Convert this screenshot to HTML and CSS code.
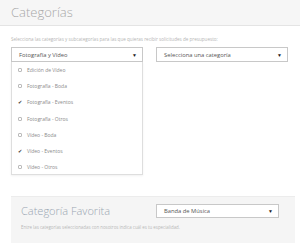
FILE: index.html
```html
<!DOCTYPE html>
<html lang="es">
<head>
<meta charset="utf-8">
<link rel="stylesheet" href="styles.css">
</head>
<body>
<div class="page">
  <div class="header">Categorías</div>
  <p class="intro">Selecciona las categorías y subcategorías para las que quieras recibir solicitudes de presupuesto:</p>
  <div class="row">
    <div class="col">
      <div class="select open"><span>Fotografía y Vídeo</span><span class="caret">▼</span></div>
      <ul class="list">
        <li><span class="cb"></span>Edición de Vídeo</li>
        <li><span class="cb"></span>Fotografía - Boda</li>
        <li><span class="cb on">✔</span>Fotografía - Eventos</li>
        <li><span class="cb"></span>Fotografía - Otros</li>
        <li><span class="cb"></span>Vídeo - Boda</li>
        <li><span class="cb on">✔</span>Vídeo - Eventos</li>
        <li><span class="cb"></span>Vídeo - Otros</li>
      </ul>
    </div>
    <div class="col">
      <div class="select"><span>Selecciona una categoría</span><span class="caret">▼</span></div>
    </div>
  </div>
  <div class="fav">
    <div class="fav-left">
      <div class="fav-title">Categoría Favorita</div>
      <div class="fav-desc">Entre las categorías seleccionadas con nosotros indica cuál es tu especialidad.</div>
    </div>
    <div class="fav-right">
      <div class="select small"><span>Banda de Música</span><span class="caret">▼</span></div>
    </div>
  </div>
</div>
</body>
</html>
```
FILE: styles.css
```css
html, body {
  margin: 0;
  padding: 0;
  background: #fff;
}
.page {
  width: 300px;
  height: 243px;
  overflow: hidden;
  font-family: "Open Sans", "Liberation Sans", sans-serif;
}
.header {
  height: 25px;
  line-height: 25px;
  background: #f6f6f6;
  border-bottom: 1px solid #e4e4e4;
  padding-left: 11px;
  font-size: 13px;
  font-weight: 300;
  color: #a8a8a8;
}
.intro {
  margin: 10px 0 0 0;
  padding: 0 11px;
  font-size: 4.6px;
  line-height: 7px;
  color: #b5b5b5;
  white-space: nowrap;
}
.row {
  display: flex;
  gap: 13px;
  padding: 0 12px 0 11px;
  margin-top: 4px;
}
.col {
  width: 132px;
}
.select {
  border: 1px solid #c8c8c8;
  background: #fff;
  box-sizing: border-box;
  height: 15px;
  display: flex;
  align-items: center;
  justify-content: space-between;
  padding: 0 5px 0 7px;
  font-size: 5.8px;
  color: #555;
}
.caret {
  font-size: 5px;
  color: #222;
}
.list {
  list-style: none;
  margin: 0;
  padding: 0 0 3px 0;
  border: 1px solid #dedede;
  border-top: none;
  box-shadow: 0 1px 2px rgba(0,0,0,0.06);
  height: 113px;
  box-sizing: border-box;
}
.list li {
  height: 16.2px;
  display: flex;
  align-items: center;
  padding-left: 6px;
  gap: 5px;
  font-size: 5px;
  color: #8a8a8a;
}
.cb {
  width: 4px;
  height: 4px;
  border: 1px solid #bbb;
  border-radius: 1px;
  box-sizing: border-box;
  display: inline-flex;
  align-items: center;
  justify-content: center;
  font-size: 5px;
  line-height: 4px;
  color: #333;
}
.cb.on {
  border-color: transparent;
}
.fav {
  margin: 21px 5px 0 11px;
  background: #f5f5f5;
  border-top: 1px solid #ececec;
  height: 46px;
  display: flex;
  padding: 0 0 0 10px;
}
.fav-left {
  width: 135px;
  padding-top: 7px;
}
.fav-title {
  font-size: 11px;
  font-weight: 300;
  color: #9aa6b2;
  line-height: 14px;
  white-space: nowrap;
}
.fav-desc {
  margin-top: 6px;
  font-size: 4.4px;
  color: #b8b8b8;
  white-space: nowrap;
}
.fav-right {
  padding-top: 7px;
}
.select.small {
  width: 123px;
  height: 14px;
}
```
